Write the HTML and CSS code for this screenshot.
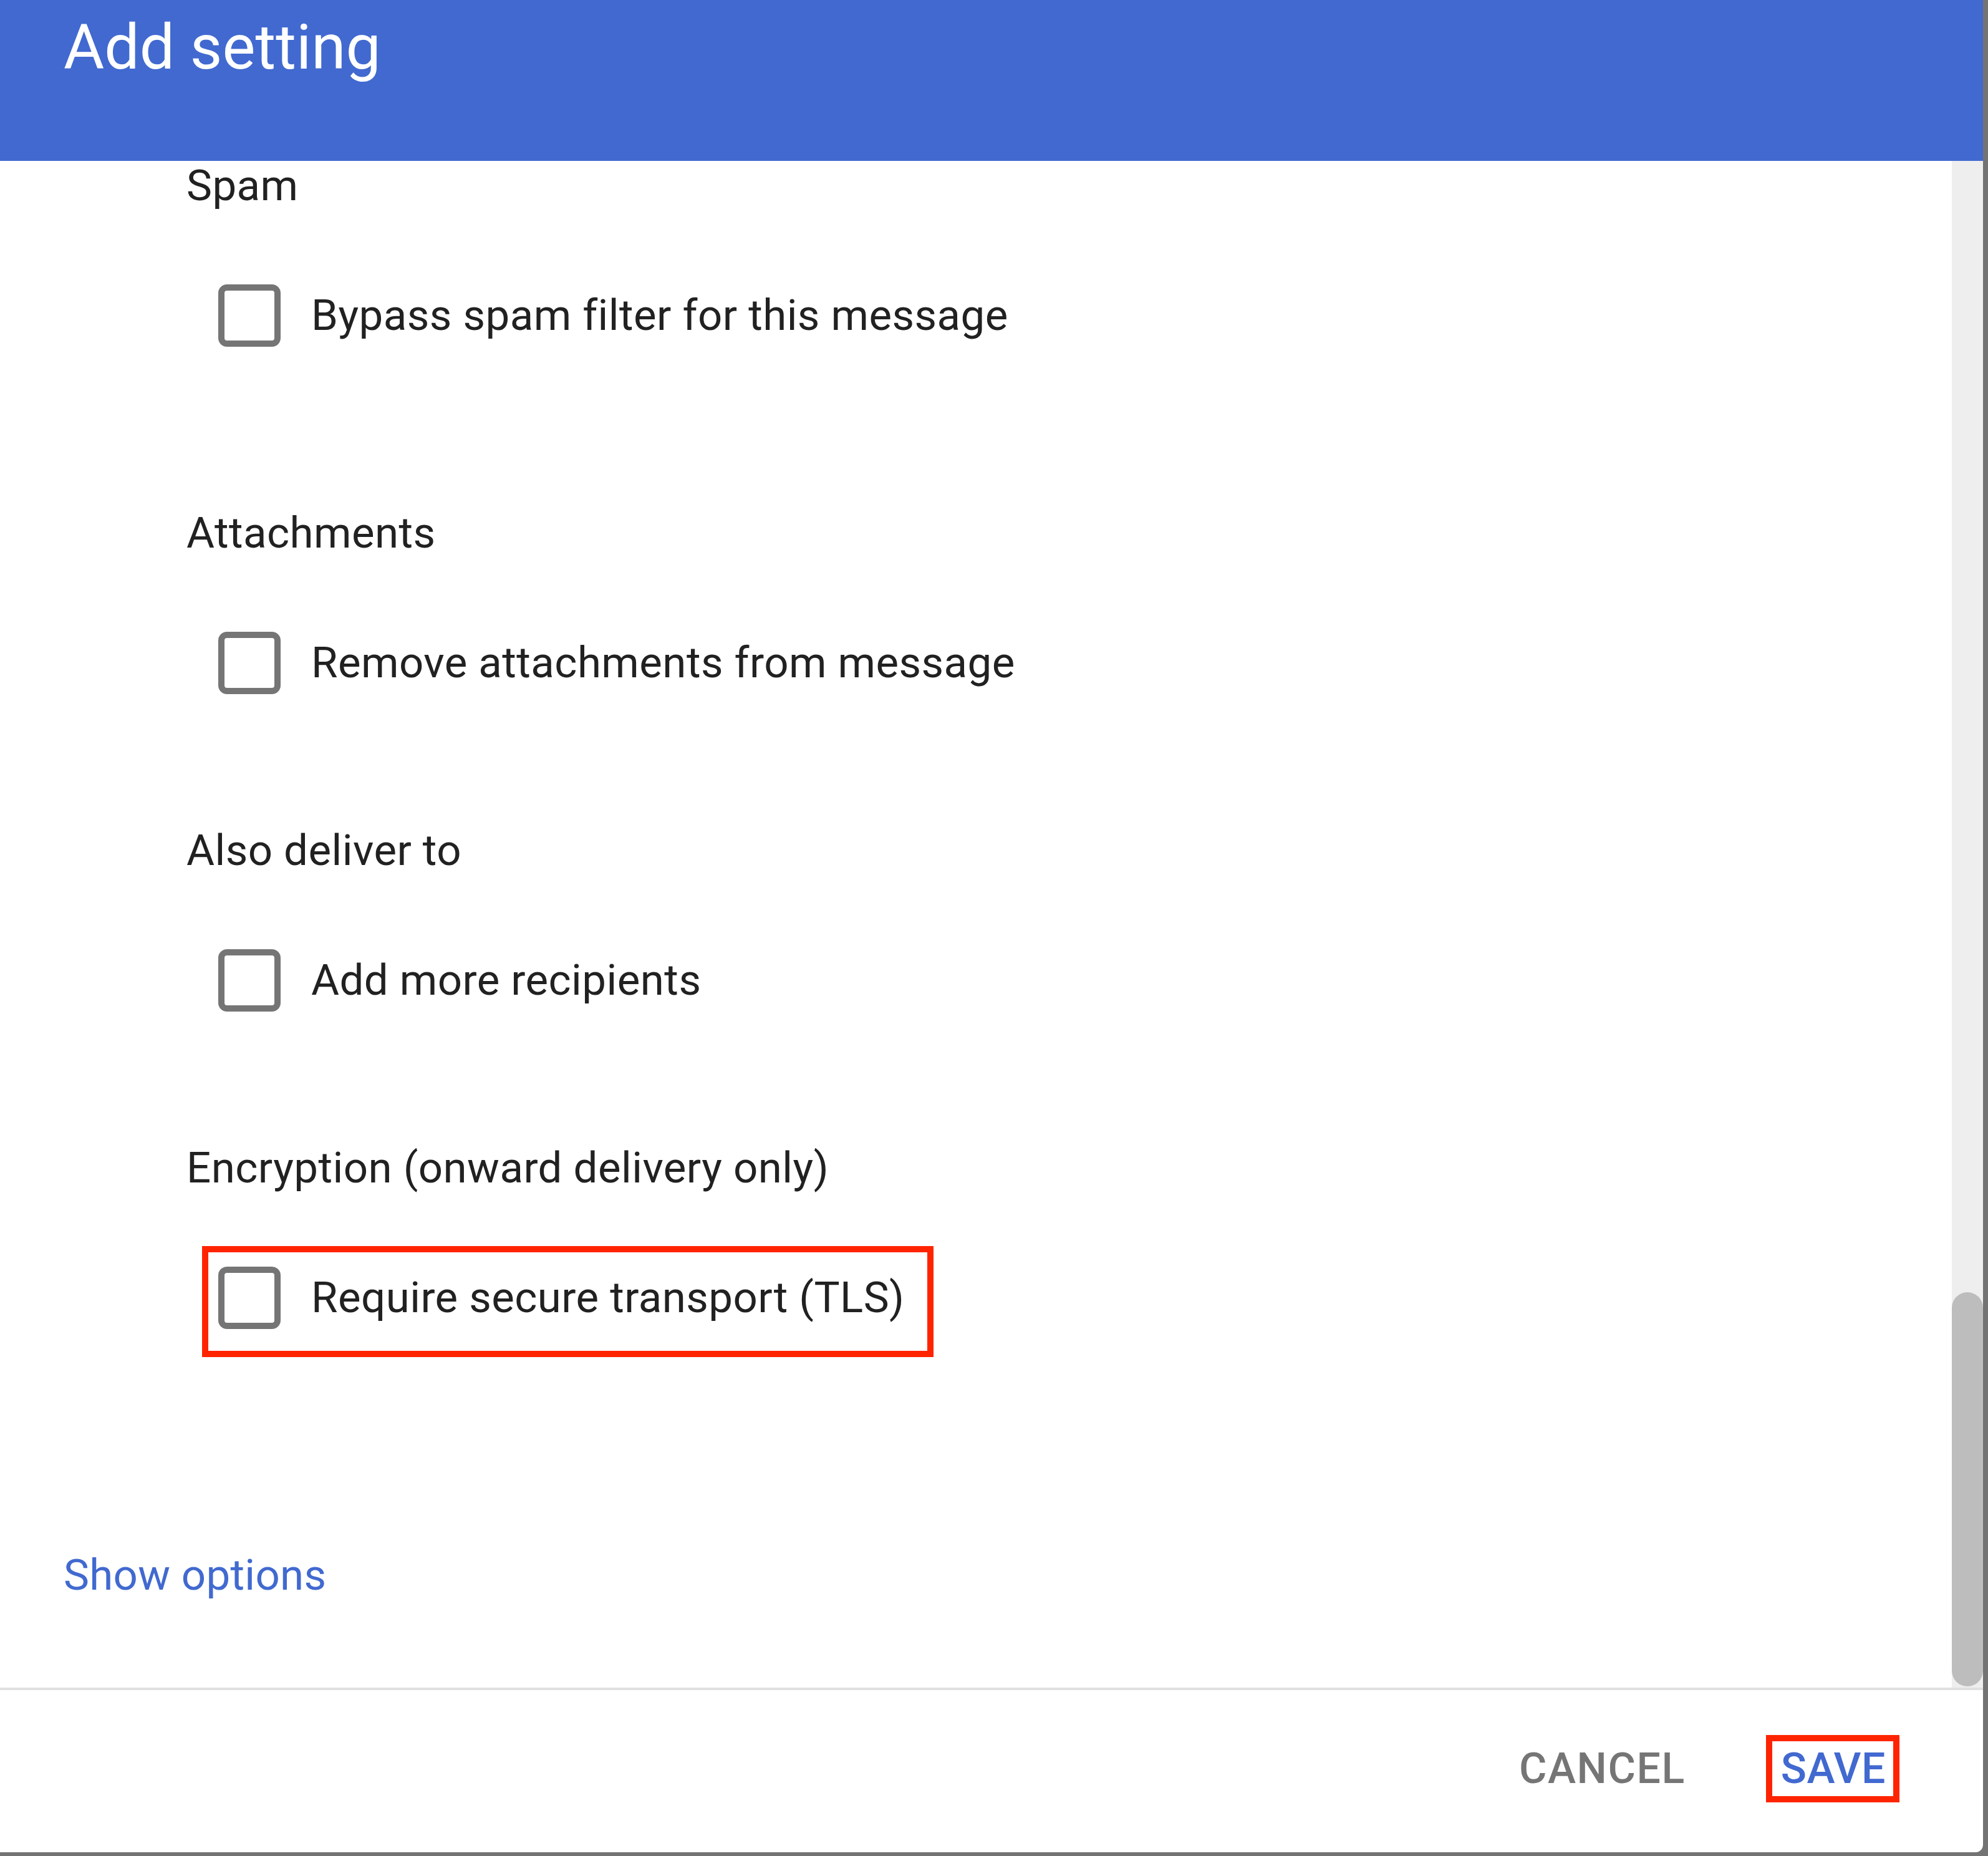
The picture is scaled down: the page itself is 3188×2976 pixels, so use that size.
FILE: index.html
```html
<!DOCTYPE html>
<html lang="en">
<head>
<meta charset="utf-8">
<title>Add setting</title>
<link rel="stylesheet" href="styles.css">
</head>
<body>
<div class="dialog">
  <header class="head">
    <h1 class="title">Add setting</h1>
  </header>
  <div class="main">
    <div class="scroll">
      <section class="sec sec-spam">
        <div class="sec-label">Spam</div>
        <label class="opt"><span class="box"></span><span class="opt-text">Bypass spam filter for this message</span></label>
      </section>
      <section class="sec">
        <div class="sec-label">Attachments</div>
        <label class="opt"><span class="box"></span><span class="opt-text">Remove attachments from message</span></label>
      </section>
      <section class="sec">
        <div class="sec-label">Also deliver to</div>
        <label class="opt"><span class="box"></span><span class="opt-text">Add more recipients</span></label>
      </section>
      <section class="sec sec-last">
        <div class="sec-label">Encryption (onward delivery only)</div>
        <label class="opt mark"><span class="box"></span><span class="opt-text">Require secure transport (TLS)</span></label>
      </section>
      <a class="more">Show options</a>
    </div>
    <div class="track"><div class="thumb"></div></div>
  </div>
  <footer class="foot">
    <button class="btn cancel">CANCEL</button>
    <button class="btn save mark">SAVE</button>
  </footer>
</div>
</body>
</html>
```

FILE: styles.css
```css
* { box-sizing: border-box; }

html, body {
  margin: 0;
  padding: 0;
}

body {
  background: #737373;
  width: 3188px;
  height: 2976px;
  overflow: hidden;
  font-family: Roboto, "Liberation Sans", Arial, sans-serif;
  color: #212121;
}

.dialog {
  width: 3180px;
  height: 2970px;
  background: #ffffff;
  border-bottom-right-radius: 12px;
  overflow: hidden;
  display: flex;
  flex-direction: column;
}

.head {
  height: 258px;
  flex: none;
  background: #4169d0;
  padding: 17px 0 0 102px;
}

.title {
  margin: 0;
  font-size: 100px;
  font-weight: 400;
  line-height: 117px;
  color: #ffffff;
}

.main {
  height: 2448px;
  flex: none;
  display: flex;
}

.scroll {
  flex: 1;
  padding-left: 102px;
}

.sec {
  padding-left: 197px;
  margin-bottom: 176px;
}

.sec-spam { margin-bottom: 224px; }
.sec-last { margin-bottom: 320px; }

.sec-label {
  font-size: 69px;
  letter-spacing: 0.45px;
  line-height: 80px;
  height: 80px;
}

.opt {
  display: flex;
  width: fit-content;
  align-items: center;
  gap: 49px;
  margin: 95px 0 0 35px;
  padding: 23px 36px 35px 16px;
  cursor: pointer;
}

.box {
  width: 100px;
  height: 100px;
  flex: none;
  border: 10px solid #757575;
  border-radius: 14px;
  background: #ffffff;
}

.opt-text {
  font-size: 69px;
  letter-spacing: 0.45px;
  line-height: 80px;
  color: #212121;
}

.mark {
  outline: 10px solid #ff2400;
  outline-offset: 0;
}

.more {
  display: block;
  font-size: 69px;
  letter-spacing: 0.3px;
  line-height: 80px;
  color: #4169d0;
  cursor: pointer;
}

.track {
  width: 50px;
  flex: none;
  background: #eeeeee;
  display: flex;
  flex-direction: column;
  justify-content: flex-end;
}

.thumb {
  height: 632px;
  margin-bottom: 2px;
  background: #bdbdbd;
  border-radius: 25px;
}

.foot {
  flex: 1;
  border-top: 4px solid #e0e0e0;
  display: flex;
  justify-content: flex-end;
  align-items: flex-start;
  gap: 126px;
  padding: 82px 144px 0 0;
}

.btn {
  font-family: Roboto, "Liberation Sans", Arial, sans-serif;
  font-size: 68px;
  font-weight: 500;
  letter-spacing: 0.6px;
  line-height: 88px;
  height: 88px;
  padding: 0 13px;
  margin: 0;
  border: 0;
  background: transparent;
  cursor: pointer;
}

.cancel { color: #757575; letter-spacing: 1.6px; }
.save { color: #4169d0; padding: 0 12px 0 14px; }
```
